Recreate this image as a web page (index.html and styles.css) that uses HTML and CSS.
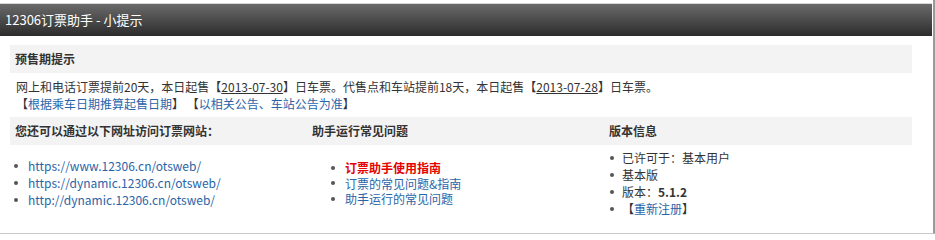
FILE: index.html
```html
<!DOCTYPE html>
<html lang="zh-CN">
<head>
<meta charset="utf-8">
<title>12306订票助手 - 小提示</title>
<link rel="stylesheet" href="styles.css">
</head>
<body>
<div class="page">
  <div class="titlebar">12306订票助手 - 小提示</div>
  <div class="content">
    <div class="sec-head">预售期提示</div>
    <div class="notice">
      <div>网上和电话订票提前20天，本日起售【<span class="date">2013-07-30</span>】日车票。代售点和车站提前18天，本日起售【<span class="date">2013-07-28</span>】日车票。</div>
      <div>【<a class="link" href="#">根据乘车日期推算起售日期</a>】 【<a class="link" href="#">以相关公告、车站公告为准</a>】</div>
    </div>
    <div class="cols">
      <div class="sec-head col-head">您还可以通过以下网址访问订票网站：</div>
      <div class="sec-head col-head">助手运行常见问题</div>
      <div class="sec-head col-head">版本信息</div>
      <ul class="list list-urls">
        <li><a class="link" href="#">https://www.12306.cn/otsweb/</a></li>
        <li><a class="link" href="#">https://dynamic.12306.cn/otsweb/</a></li>
        <li><a class="link" href="#">http://dynamic.12306.cn/otsweb/</a></li>
      </ul>
      <ul class="list list-faq">
        <li><a class="link hot" href="#">订票助手使用指南</a></li>
        <li><a class="link" href="#">订票的常见问题&amp;指南</a></li>
        <li><a class="link" href="#">助手运行的常见问题</a></li>
      </ul>
      <ul class="list list-ver">
        <li>已许可于：基本用户</li>
        <li>基本版</li>
        <li>版本：<b>5.1.2</b></li>
        <li>【<a class="link" href="#">重新注册</a>】</li>
      </ul>
    </div>
  </div>
</div>
</body>
</html>
```
FILE: styles.css
```css
html, body {
  margin: 0;
  padding: 0;
  background: #fff;
}
body {
  font-family: "Noto Sans CJK SC", "Noto Sans", sans-serif;
  font-size: 12px;
  color: #333;
}
.page {
  box-sizing: border-box;
  width: 935px;
  height: 234px;
  padding-top: 3px;
  border-right: 2px solid #9a9a9a;
  border-bottom: 1px solid #c8c8c8;
}
.titlebar {
  border-top: 1px solid #d6d6d6;
  height: 32px;
  line-height: 32px;
  padding-left: 5px;
  margin-right: 1px;
  color: #fff;
  font-size: 13px;
  background: linear-gradient(#6a6a6a, #2c2c2c);
}
.content {
  padding: 9px 21px 0 10px;
}
.sec-head {
  background: #f3f3f3;
  height: 28px;
  line-height: 28px;
  padding-left: 5px;
  font-weight: bold;
  color: #333;
}
.notice {
  padding: 5px 6px 5px 6px;
  line-height: 17px;
}
.date {
  text-decoration: underline;
}
.link {
  color: #2a64a8;
  text-decoration: none;
}
.link.hot {
  color: #e60000;
  font-weight: bold;
}
.cols {
  display: grid;
  grid-template-columns: 297px 297px 1fr;
}
.list {
  list-style: none;
  margin: 0;
  padding: 0;
}
.list li {
  display: flex;
  align-items: center;
  line-height: 17px;
}
.list li::before {
  content: "";
  flex: none;
  width: 4px;
  height: 4px;
  border-radius: 50%;
  background: #555;
}
.list-urls {
  padding-top: 12px;
}
.list-urls li {
  padding-left: 4px;
}
.list-urls li::before {
  margin-right: 10px;
}
.list-faq {
  padding-top: 15px;
}
.list-faq li {
  line-height: 15.5px;
  padding-left: 24px;
}
.list-faq li::before {
  margin-right: 10px;
}
.list-ver {
  padding-top: 4px;
}
.list-ver li {
  padding-left: 6px;
}
.list-ver li::before {
  margin-right: 8px;
}
```
